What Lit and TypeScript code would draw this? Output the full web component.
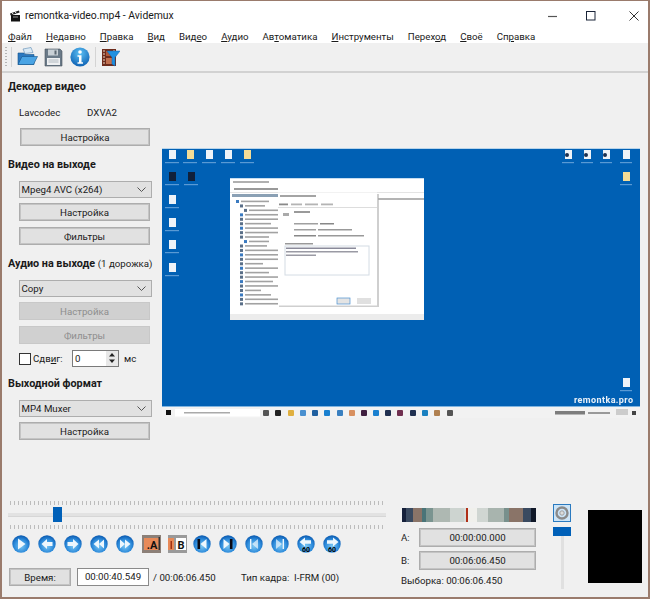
import { LitElement, html, svg, css } from 'lit';
import { customElement } from 'lit/decorators.js';

const treeRows = [
  [6, 28], [10, 20], [14, 36], [10, 44], [10, 40], [10, 26], [10, 34], [10, 42], [10, 24], [14, 20],
  [10, 22], [10, 38], [10, 34], [10, 40], [10, 18], [10, 42], [10, 24], [10, 36], [10, 28], [10, 40],
  [10, 16], [10, 26], [10, 38], [10, 36],
];
const leftIcons = [[172, 155], [190, 155], [209, 155], [228, 155], [247, 155], [172, 177], [191, 177], [172, 200], [172, 223], [172, 245], [172, 268]];
const rightIcons = [[568, 155], [587, 155], [606, 155], [626, 155], [626, 177], [626, 383]];
const taskIcons = [
  [266, '#555'], [278, '#222'], [291, '#e0b040'], [303, '#4a90d0'], [315, '#2060a0'], [327, '#1a80d0'], [340, '#3a80c0'],
  [352, '#d89060'], [364, '#402040'], [376, '#1a80d0'], [388, '#203050'], [400, '#703050'], [413, '#203050'], [425, '#1a80c0'], [437, '#b08050'], [450, '#555'],
];
const dialogTabs = [[279, 9, '#8a8a8a'], [291, 11, '#b4b4b4'], [305, 13, '#b4b4b4'], [321, 12, '#b4b4b4']];

function desktop() {
  // coordinates are the page's, the viewBox starts at the picture's corner (162,148)
  return svg`<svg class="desk" width="478" height="272" viewBox="162 148 478 272">
    <rect x="162" y="148" width="478" height="272" fill="#f0f0f0"/>
    <rect x="162" y="148" width="478" height="1" fill="#b8d4ea"/>
    <rect x="162" y="149" width="478" height="258" fill="#0060b4"/>
    <rect x="162" y="406" width="478" height="1.5" fill="#7fb4e0"/>
    ${leftIcons.map(([x, y], i) => svg`
      <rect x=${x - 3} y=${y - 5} width="7" height="9" fill=${i === 5 || i === 6 ? '#10203a' : i === 1 || i === 4 ? '#f4dc96' : '#eef3f8'}/>
      <rect x=${x - 7} y=${y + 7} width="14" height="1.2" fill="#5a9ad4"/>`)}
    ${rightIcons.map(([x, y], i) => svg`
      <rect x=${x - 3} y=${y - 5} width="7" height="9" fill=${i === 4 ? '#f4dc96' : '#eef3f8'}/>
      ${i < 3 ? svg`<circle cx=${x - 1} cy=${y} r="2" fill="#1a3050"/>` : ''}
      <rect x=${x - 6} y=${y + 7} width="12" height="1.2" fill="#5a9ad4"/>`)}
    <rect x="230" y="178" width="194" height="142" fill="#fff"/>
    <rect x="230" y="178" width="194" height="1" fill="#c4dcf0"/>
    <rect x="233" y="181" width="36" height="2" fill="#b0b0b0"/>
    <rect x="234" y="188" width="44" height="2" fill="#999"/>
    <rect x="230" y="192" width="194" height="1" fill="#e4e4e4"/>
    <rect x="232" y="194" width="46" height="3" fill="#8aa0b4"/>
    <rect x="378" y="198" width="46" height="2" fill="#b4b4b4"/>
    ${treeRows.map(([dx, w], i) => svg`
      <rect x=${230 + dx} y=${200 + i * 4.45} width="3" height="3" fill=${i % 3 ? '#5a6f88' : '#3a7ac0'}/>
      <rect x=${235 + dx} y=${200.6 + i * 4.45} width=${w} height="1.6" fill="#a2a2a2"/>`)}
    <rect x="230" y="314" width="194" height="6" fill="#ececec"/>
    <rect x="279" y="194" width="100" height="113" fill="#a8a8a8" opacity=".55"/>
    <rect x="278" y="192.5" width="99" height="113" fill="#fff"/>
    <rect x="280" y="195" width="36" height="2" fill="#a4a4a4"/>
    ${dialogTabs.map(([x, w, c]) => svg`<rect x=${x as number} y="203.500" width=${w as number} height="1.800" fill=${c as string}/>`)}
    <rect x="278" y="207" width="99" height="1" fill="#ddd"/>
    <rect x="283" y="213" width="6" height="3" fill="#aaa"/>
    <rect x="294" y="211" width="16" height="2" fill="#9a9a9a"/>
    <rect x="294" y="223" width="24" height="1.5" fill="#a0a0a0"/>
    <rect x="320" y="223" width="14" height="1.5" fill="#888"/>
    <rect x="294" y="229" width="22" height="1.5" fill="#a0a0a0"/>
    <rect x="318" y="229" width="34" height="1.5" fill="#999"/>
    <rect x="294" y="235" width="22" height="1.5" fill="#888"/>
    <rect x="318" y="235" width="46" height="1.5" fill="#999"/>
    <rect x="285" y="243" width="28" height="1.5" fill="#999"/>
    <rect x="285" y="246" width="84" height="29" fill="#fff" stroke="#d4dce4"/>
    <rect x="286" y="247.5" width="70" height="1.5" fill="#8a8a9a"/>
    <rect x="286" y="251" width="72" height="1.5" fill="#9a9aa4"/>
    <rect x="286" y="254.5" width="30" height="1.5" fill="#9a9aa4"/>
    <rect x="337" y="298" width="13" height="6" fill="#e4e4e4" stroke="#4a90d0" stroke-width=".7"/>
    <rect x="357" y="298" width="14" height="6" fill="#e0e0e0"/>
    <text x="574" y="403" class="brand">remontka.pro</text>
    <rect x="162" y="407" width="478" height="11" fill="#f2f2f2"/>
    <rect x="166" y="410" width="5" height="5" fill="#111"/>
    <rect x="175" y="409" width="85" height="7.5" fill="#fff"/>
    <rect x="184" y="412" width="46" height="1.5" fill="#aaa"/>
    ${taskIcons.map(([x, c]) => svg`<rect x=${(x as number) - 3} y="410" width="6" height="6" rx="1" fill=${c as string}/>`)}
    <rect x="555" y="411" width="30" height="3.5" fill="#555" opacity=".75"/>
    <rect x="588" y="412" width="22" height="2" fill="#999"/>
    <rect x="616" y="409" width="12" height="6" fill="#ccc"/>
    <rect x="632" y="411" width="4" height="4" fill="#444"/>
  </svg>`;
}

// round blue transport button, glyph drawn on a 18x18 box
function round(glyph: unknown) {
  return html`<svg class="rnd" width="18" height="18" viewBox="0 0 18 18">
    <defs><radialGradient id="g" cx="50%" cy="62%" r="60%"><stop offset="0" stop-color="#7cc8f4"/><stop offset="0.65" stop-color="#2c8ada"/><stop offset="1" stop-color="#0c5cb2"/></radialGradient></defs>
    <circle cx="9" cy="9" r="8.700" fill="url(#g)"/>${glyph}</svg>`;
}
const W = '#eef7fd';
const glyphs = [
  svg`<path d="M6 3.500 13.500 9 6 14.500Z" fill=${W}/>`,
  svg`<path d="M3.500 9 9 4v3h5.500v4H9v3Z" fill=${W}/>`,
  svg`<path d="M14.500 9 9 4v3H3.500v4H9v3Z" fill=${W}/>`,
  svg`<path d="M3.500 9 9 4.500v9ZM9 9l5-4.500v9Z" fill=${W}/>`,
  svg`<path d="M14.500 9 9 4.500v9ZM9 9 4 4.500v9Z" fill=${W}/>`,
  svg`<path d="M4.500 4h2.600v10H4.500Z" fill="#0a0a14"/><path d="M7.500 9l6-5v10Z" fill=${W}/>`,
  svg`<path d="M10.900 4h2.600v10h-2.600Z" fill="#0a0a14"/><path d="M10.500 9 4.500 4v10Z" fill=${W}/>`,
  svg`<path d="M5 4h1.400v10H5Z" fill=${W}/><path d="M7 9l6-5v10Z" fill=${W} opacity=".7"/>`,
  svg`<path d="M11.600 4H13v10h-1.400Z" fill=${W}/><path d="M11 9 5 4v10Z" fill=${W} opacity=".7"/>`,
  svg`<path d="M2.500 7 8 2.500v2.800h6v3.400H8V11.500Z" fill=${W}/><text x="9" y="16.500" class="sixty">60</text>`,
  svg`<path d="M15.500 7 10 2.500v2.800H4v3.400h6V11.500Z" fill=${W}/><text x="9" y="16.500" class="sixty">60</text>`,
];

@customElement('app-root')
export class AppRoot extends LitElement {
  static styles = css`
    :host {
      display: flex;
      flex-direction: column;
      box-sizing: border-box;
      width: 650px;
      height: 599px;
      border: 2px solid #9a7b6c;
      border-top-width: 1px;
      background: #f0f0f0;
      color: #1a1a1a;
      font: 9.700px Roboto, "Noto Sans", sans-serif;
      overflow: hidden;
    }
    button {
      font: inherit;
      color: inherit;
      padding: 0;
      box-sizing: border-box;
      background: #e1e1e1;
      border: 1px solid #adadad;
      outline: 1px solid #c4c4c4;
      outline-offset: -2px;
    }
    u { text-underline-offset: 1px; }

    .title { display: flex; align-items: center; height: 29px; background: #fff; padding-left: 8px; font-size: 10.400px; }
    .title .clap { margin-right: 4px; }
    .title .name { flex: 1; }
    .winbtns { display: flex; align-items: center; padding-right: 9px; }
    .winbtns svg + svg { margin-left: 28px; }
    .winbtns svg:last-child { margin-left: 33px; }

    .menu { display: flex; gap: 14px; height: 13px; background: #fff; line-height: 13px; padding-left: 6px; }
    .menu span { white-space: nowrap; }

    .tools { display: flex; align-items: center; height: 28px; background: #f0f0f0; border-bottom: 2px solid #d2d2d2; padding-left: 3px; }
    .grip { width: 2px; height: 20px; margin-right: 4px; background: repeating-linear-gradient(#b4b4b4 0 1px, transparent 1px 3px); }
    .sep { width: 1px; height: 20px; background: #d4d4d4; }
    .tools svg { display: block; }

    .main { display: flex; height: 422px; }
    .side { width: 160px; padding: 6px 0 0 6px; box-sizing: border-box; flex: none; display: flex; flex-direction: column; }
    h3 { margin: 0; font-size: 10.800px; font-weight: 700; line-height: 16px; white-space: nowrap; }
    h3 span { font-weight: 400; font-size: 9.700px; }
    .codec { display: flex; margin: 10px 0 0 11px; height: 16px; line-height: 16px; }
    .codec span:first-child { width: 68px; }
    .btn { display: block; width: 131px; height: 18px; margin: 6px 0 0 11px; }
    .btn[disabled] { background: #d0d0d0; border-color: #c8c8c8; outline: none; color: #8e8e8e; }
    .first { width: 130px; margin: 7px 0 0 12px; }
    .combo { display: flex; align-items: center; justify-content: space-between; box-sizing: border-box; width: 133px; height: 17px; margin: 8px 0 0 10.500px; background: #e1e1e1; border: 1px solid #adadad; padding: 0 5px 0 2px; }
    .shift { display: flex; align-items: center; height: 17px; margin: 6px 0 0 11px; }
    .check { box-sizing: border-box; width: 12px; height: 12px; background: #fff; border: 1px solid #333; margin-right: 2px; }
    .shift-label { width: 30px; }
    .spin { display: flex; box-sizing: border-box; width: 47px; height: 17px; margin: 0 5px 0 9px; background: #fff; border: 1px solid #7a7a7a; line-height: 15px; padding-left: 2px; justify-content: space-between; }
    .spin i { display: flex; flex-direction: column; width: 12px; background: #e8e8e8; }
    .gap11 { margin-top: 11px; }
    .gap9 { margin-top: 9px; }
    .gap5 { margin-top: 5px; }

    .view { padding-top: 75px; }
    .desk { display: block; filter: blur(.35px); }
    .brand { font: 700 9px Roboto, sans-serif; letter-spacing: .4px; fill: #e8f0f8; }

    .bottom { flex: 1; display: flex; }
    .transport { width: 392px; flex: none; }
    .ticks { height: 4px; margin: 0 0 0 8px; width: 376px; background: repeating-linear-gradient(90deg, #bcbcbc 0 1px, transparent 1px 4px); }
    .first-ticks { margin-top: 6px; }
    .slider { position: relative; height: 16px; margin: 2px 0 2px 6px; width: 378px; display: flex; align-items: center; }
    .slider .track { flex: 1; height: 3px; background: #e2e2e2; border-bottom: 1px solid #d6d6d6; }
    .slider .thumb { position: absolute; left: 45px; top: 0; width: 9px; height: 15px; background: #0060b8; }
    .controls { display: flex; align-items: center; height: 20px; margin: 5px 0 0 10px; }
    .rnd { display: block; flex: none; }
    .rnd + .rnd { margin-left: 8px; }
    .rnd .sixty { font: 700 7px Roboto, sans-serif; fill: #000; text-anchor: middle; }
    .mark-a { margin: 0 7px 0 8px; flex: none; }
    .mark-b { margin-right: 6px; flex: none; }
    .mark { font: 700 11px Roboto, sans-serif; fill: #111; text-anchor: middle; }
    .time { display: flex; align-items: center; height: 18px; margin: 14px 0 0 7px; white-space: nowrap; }
    .time button { width: 62px; height: 18px; margin-right: 6px; }
    .time .val { box-sizing: border-box; width: 72px; height: 18px; background: #fff; border: 1px solid #8a8a8a; text-align: center; line-height: 16px; margin-right: 4px; }
    .time .total { width: 88px; }
    .abox { width: 134px; padding-top: 13px; margin-left: 8px; flex: none; }
    .stripe { height: 14px; background: linear-gradient(90deg, #15203a 0 3%, #3a4a60 3% 8%, #8a7468 8% 15%, #4a7478 15% 18%, #7a9490 18% 23%, #aeb8b2 23% 36%, #cdd4d0 36% 46%, #d8dcda 46% 48%, #b03018 48% 49%, #f0f0ec 49% 56%, #d0d6d2 56% 64%, #a8b4ae 64% 76%, #78908c 76% 80%, #8a7468 80% 90%, #3a4a60 90% 96%, #101828 96%); }
    .ab { display: flex; align-items: center; height: 19px; margin-top: 6px; }
    .ab + .ab { margin-top: 4px; }
    .ab b { font-weight: 400; width: 18px; flex: none; margin-left: -1px; }
    .ab button { flex: 1; height: 18.500px; }
    .sel { margin: 3px 0 0 -1px; height: 16px; line-height: 16px; white-space: nowrap; }
    .volume { width: 18px; margin-left: 17px; padding-top: 9px; flex: none; display: flex; flex-direction: column; align-items: center; }
    .vbtn { box-sizing: border-box; width: 18px; height: 18px; background: #cce4f7; border: 1px solid #2a7ac0; display: flex; align-items: center; justify-content: center; }
    .vthumb { width: 18px; height: 9px; background: #0060b8; margin-top: 5px; }
    .vtrack { width: 3px; height: 53px; background: #e0e0e0; }
    .black { width: 54px; height: 73px; background: #000; margin: 15px 0 0 17px; flex: none; }
  `;

  private combo(label: string) {
    return html`<div class="combo"><span>${label}</span>
      <svg width="9" height="5" viewBox="0 0 9 5"><path d="M.5.500 4.500 4.500 8.500.500" fill="none" stroke="#555"/></svg></div>`;
  }

  render() {
    return html`
      <div class="title">
        <svg class="clap" width="11" height="12" viewBox="0 0 11 12"><path d="M1 5h9v6.500H1Z" fill="#111"/><path d="M0 3.500 9 .5l.6 2L.6 5.500Z" fill="#222"/><path d="M2 3.200l1.500 1M5 2.200l1.500 1" stroke="#ddd"/><path d="M3 7h5" stroke="#999"/></svg>
        <span class="name">remontka-video.mp4 - Avidemux</span>
        <div class="winbtns">
          <svg width="10" height="10" viewBox="0 0 10 10"><path d="M0 5.500h9" stroke="#555" stroke-width="1.200"/></svg>
          <svg width="10" height="10" viewBox="0 0 10 10"><rect x=".5" y=".5" width="8.500" height="8.500" fill="none" stroke="#1a2438"/></svg>
          <svg width="10" height="10" viewBox="0 0 10 10"><path d="M.5.500l9 9M9.500.500l-9 9" stroke="#333"/></svg>
        </div>
      </div>
      <div class="menu">
        <span><u>Ф</u>айл</span>
        <span><u>Н</u>едавно</span>
        <span><u>П</u>равка</span>
        <span><u>В</u>ид</span>
        <span>Вид<u>е</u>о</span>
        <span><u>А</u>удио</span>
        <span>Ав<u>т</u>оматика</span>
        <span><u>И</u>нструменты</span>
        <span>Перех<u>о</u>д</span>
        <span><u>С</u>воё</span>
        <span>Сп<u>р</u>авка</span>
      </div>
      <div class="tools">
        <div class="grip"></div><div class="sep"></div>
        <svg style="margin-left:5px" width="21" height="20" viewBox="0 0 21 20">
          <path d="M6 2l8-1.500 2 5-8 1Z" fill="#dbeaf5" stroke="#5a8ab4" stroke-width=".6"/>
          <path d="M1 6h6l1 1.500h9v10H1Z" fill="#2a78c0" stroke="#14548c" stroke-width=".6"/>
          <path d="M1 17.500 5 9.500h15.500l-4 8Z" fill="#4aa4e4" stroke="#14548c" stroke-width=".6"/>
        </svg>
        <svg style="margin-left:6px" width="19" height="19" viewBox="0 0 19 19">
          <path d="M1 1h15l2 2v15H1Z" fill="#6a7a88" stroke="#4a5560" stroke-width=".6"/>
          <rect x="4" y="1.500" width="10" height="6" fill="#c8d0d6"/>
          <rect x="3" y="10" width="13" height="7" fill="#eef0f2"/>
          <path d="M4.500 12h10M4.500 14h10" stroke="#9aa4ac" stroke-width=".7"/>
          <rect x="10.500" y="2.500" width="2" height="4" fill="#5a6670"/>
        </svg>
        <svg style="margin-left:7px" width="20" height="20" viewBox="0 0 20 20">
          <defs><radialGradient id="inf" cx="50%" cy="30%" r="75%"><stop offset="0" stop-color="#5cc0f4"/><stop offset="1" stop-color="#0a5cb0"/></radialGradient></defs>
          <circle cx="10" cy="10" r="9.600" fill="url(#inf)"/>
          <circle cx="10" cy="5" r="1.800" fill="#fff"/>
          <path d="M7.500 8.200h4v7h1.500v1.500H7.500v-1.500H9v-5.500H7.500Z" fill="#fff"/>
        </svg>
        <div class="sep" style="margin-left:5px"></div>
        <svg style="margin-left:5px" width="19" height="19" viewBox="0 0 19 19">
          <rect x="1" y="1" width="14" height="17" fill="#6e2c1c"/>
          <path d="M2 3h2M2 6h2M2 9h2M2 12h2M2 15h2M12 3h2" stroke="#e8d8c8" stroke-width="1.200"/>
          <rect x="5" y="3" width="6" height="5" fill="#b0583a"/><rect x="5" y="10" width="6" height="6" fill="#c07050"/>
          <path d="M6 3h13l-5 6.500V18l-3-2V9.500Z" fill="#2090e0" stroke="#1064b0" stroke-width=".5"/>
        </svg>
      </div>
      <div class="main">
        <div class="side">
          <h3>Декодер видео</h3>
          <div class="codec"><span>Lavcodec</span><span>DXVA2</span></div>
          <button class="btn first">Настройка</button>
          <h3 class="gap11">Видео на выходе</h3>
          ${this.combo('Mpeg4 AVC (x264)')}
          <button class="btn gap5">Настройка</button>
          <button class="btn">Фильтры</button>
          <h3 class="gap11">Аудио на выходе <span>(1 дорожка)</span></h3>
          ${this.combo('Copy')}
          <button class="btn gap5" disabled>Настройка</button>
          <button class="btn" disabled>Фильтры</button>
          <div class="shift">
            <div class="check"></div><span class="shift-label">Сдв<u>и</u>г:</span>
            <div class="spin">0<i>
              <svg width="12" height="7" viewBox="0 0 12 7"><path d="M3 5.500 6 2l3 3.500Z" fill="#222"/></svg>
              <svg width="12" height="7" viewBox="0 0 12 7"><path d="M3 1.500 6 5l3-3.500Z" fill="#222"/></svg>
            </i></div><span>мс</span>
          </div>
          <h3 class="gap9">Выходной формат</h3>
          ${this.combo('MP4 Muxer')}
          <button class="btn gap5">Настройка</button>
        </div>
        <div class="view">${desktop()}</div>
      </div>
      <div class="bottom">
        <div class="transport">
          <div class="ticks first-ticks"></div>
          <div class="slider"><div class="track"></div><div class="thumb"></div></div>
          <div class="ticks"></div>
          <div class="controls">
            ${glyphs.slice(0, 5).map((g) => round(g))}
            <svg class="mark-a" width="19" height="18" viewBox="0 0 19 18"><rect width="19" height="18" fill="#8c8078"/><rect x="2" y="3" width="15" height="12" fill="#e88a58"/><text x="10" y="14" class="mark">.A</text><rect x="16.500" y="2" width="1.500" height="13" fill="#333"/></svg>
            <svg class="mark-b" width="19" height="18" viewBox="0 0 19 18"><rect width="19" height="18" fill="#9a9a9a"/><rect x="0" y="3" width="6" height="12" fill="#e88a58"/><rect x="2.500" y="6" width="1.500" height="8" fill="#a03010"/><rect x="8" y="3" width="10" height="12" fill="#fff"/><text x="13" y="14" class="mark">B</text></svg>
            ${glyphs.slice(5).map((g) => round(g))}
          </div>
          <div class="time">
            <button>Время:</button>
            <div class="val">00:00:40.549</div>
            <div class="total">/ 00:06:06.450</div>
            <span>Тип кадра:&nbsp; I-FRM (00)</span>
          </div>
        </div>
        <div class="abox">
          <div class="stripe"></div>
          <div class="ab"><b>A:</b><button>00:00:00.000</button></div>
          <div class="ab"><b>B:</b><button>00:06:06.450</button></div>
          <div class="sel">Выборка: 00:06:06.450</div>
        </div>
        <div class="volume">
          <div class="vbtn">
            <svg width="14" height="14" viewBox="0 0 14 14"><circle cx="7" cy="7" r="5.500" fill="none" stroke="#8a8a8a" stroke-width="2.400"/><circle cx="7" cy="7" r="2.200" fill="#dcdcdc" stroke="#a0a0a0"/></svg>
          </div>
          <div class="vthumb"></div>
          <div class="vtrack"></div>
        </div>
        <div class="black"></div>
      </div>
    `;
  }
}
